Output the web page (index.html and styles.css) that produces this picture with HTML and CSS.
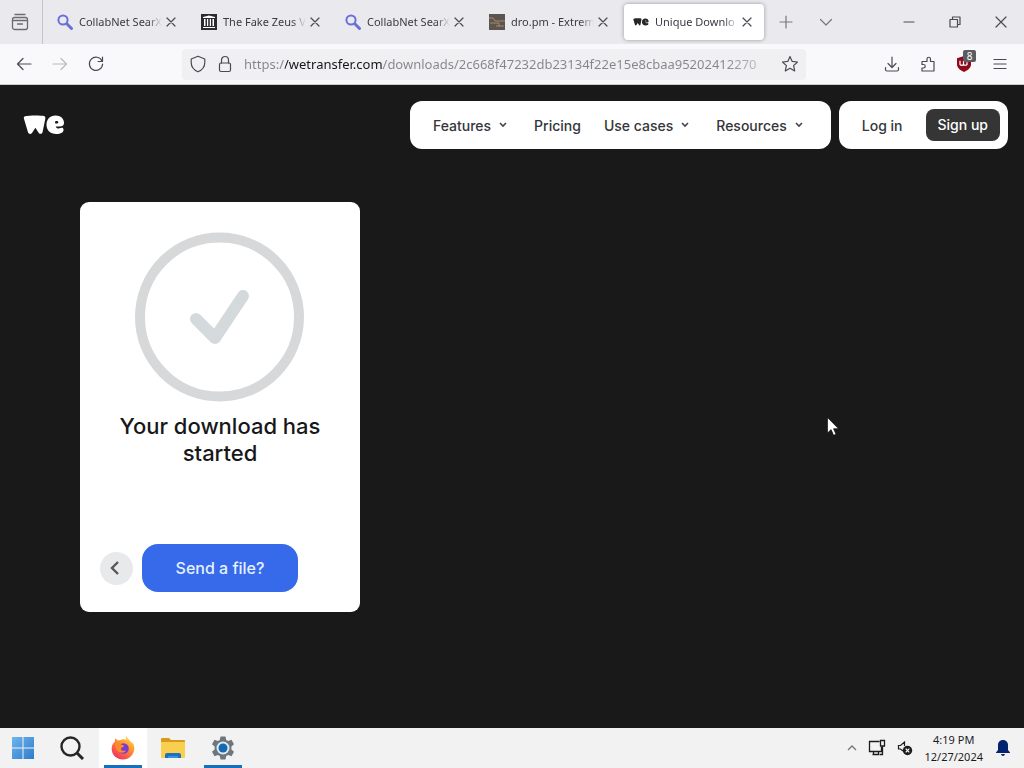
FILE: index.html
```
<!DOCTYPE html>
<html lang="en">
<head>
    <title>Unique Download Page</title>
    <meta charset="UTF-8">
    <link rel="stylesheet" href="styles.css">
</head>
<body>
    <div class="tab-strip">
        <button class="view-btn" aria-label="Firefox View">
            <svg width="18" height="18" viewBox="0 0 18 18" fill="none" stroke="#6b6b74" stroke-width="1.3" stroke-linecap="round"><path d="M4 1.500h10"/><rect x="1.500" y="4.500" width="15" height="12" rx="2"/><path d="M1.500 7.500h15M6.500 11h5"/></svg>
        </button>
        <div class="tabs">
            <div class="tab">
                <svg width="16" height="16" viewBox="0 0 16 16" fill="none" stroke="#6b70d8"><circle cx="6" cy="6" r="4.600" stroke-width="2"/><path d="M9.800 9.800l4.700 4.700" stroke-width="3" stroke-linecap="round"/></svg>
                <span class="tab-label">CollabNet SearX</span>
                <button class="tab-close" aria-label="Close tab"><svg width="10" height="10" viewBox="0 0 10 10"><path d="M1 1l8 8M9 1l-8 8"/></svg></button>
            </div>
            <div class="tab">
                <svg width="16" height="16" viewBox="0 0 16 16"><path fill="#2b2b2f" d="M0 0h16v16H0z"/><path fill="#fff" d="M2 3l6-1.500L14 3v1H2zM2 13h12v1H2zM3 5h1.500v7H3zM6 5h1.200v7H6zM8.800 5H10v7H8.800zM11.500 5H13v7h-1.500z"/></svg>
                <span class="tab-label">The Fake Zeus V</span>
                <button class="tab-close" aria-label="Close tab"><svg width="10" height="10" viewBox="0 0 10 10"><path d="M1 1l8 8M9 1l-8 8"/></svg></button>
            </div>
            <div class="tab">
                <svg width="16" height="16" viewBox="0 0 16 16" fill="none" stroke="#6b70d8"><circle cx="6" cy="6" r="4.600" stroke-width="2"/><path d="M9.800 9.800l4.700 4.700" stroke-width="3" stroke-linecap="round"/></svg>
                <span class="tab-label">CollabNet SearX</span>
                <button class="tab-close" aria-label="Close tab"><svg width="10" height="10" viewBox="0 0 10 10"><path d="M1 1l8 8M9 1l-8 8"/></svg></button>
            </div>
            <div class="tab">
                <svg width="16" height="16" viewBox="0 0 16 16"><path fill="#5d5450" d="M0 0h16v16H0z"/><path d="M0 4h4l2 3h10M1 9h9v3h5M7 12h4" fill="none" stroke="#a08c68"/></svg>
                <span class="tab-label">dro.pm - Extrem</span>
                <button class="tab-close" aria-label="Close tab"><svg width="10" height="10" viewBox="0 0 10 10"><path d="M1 1l8 8M9 1l-8 8"/></svg></button>
            </div>
            <div class="tab active">
                <svg width="16" height="16" viewBox="0 0 42 42" fill="#27272b"><use href="#we-mark" y="11"/></svg>
                <span class="tab-label">Unique Downlo</span>
                <button class="tab-close" aria-label="Close tab"><svg width="10" height="10" viewBox="0 0 10 10"><path d="M1 1l8 8M9 1l-8 8"/></svg></button>
            </div>
        </div>
        <button class="strip-btn" aria-label="New tab"><svg width="14" height="14" viewBox="0 0 14 14"><path d="M7 1v12M1 7h12"/></svg></button>
        <button class="strip-btn" aria-label="List all tabs"><svg width="14" height="14" viewBox="0 0 14 14"><path d="M1.500 4.500L7 10l5.500-5.500"/></svg></button>
        <div class="window-btns">
            <button aria-label="Minimize"><svg width="12" height="12" viewBox="0 0 12 12"><path d="M1 6h10"/></svg></button>
            <button aria-label="Restore"><svg width="12" height="12" viewBox="0 0 12 12"><path d="M1 3.500h7.500V11H1zM3.500 3.500V1H11v7.500H8.500"/></svg></button>
            <button aria-label="Close"><svg width="12" height="12" viewBox="0 0 12 12"><path d="M1 1l10 10M11 1L1 11"/></svg></button>
        </div>
    </div>

    <div class="toolbar">
        <div class="toolbar-left">
            <button aria-label="Back"><svg width="16" height="16" viewBox="0 0 16 16"><path d="M15 8H1.500M7 2.500L1.500 8 7 13.500"/></svg></button>
            <button aria-label="Forward" disabled><svg width="16" height="16" viewBox="0 0 16 16"><path d="M1 8h13.500M9 2.500L14.500 8 9 13.500"/></svg></button>
            <button aria-label="Reload"><svg width="16" height="16" viewBox="0 0 16 16"><path d="M14 5A6.600 6.600 0 1 0 14.600 8M14.500 1v4.500H10"/></svg></button>
        </div>
        <div class="url-bar">
            <svg width="16" height="18" viewBox="0 0 16 18"><path d="M8 1.200L14.800 4v3.500c0 4-2.600 7.500-6.800 9.300C3.800 15 1.200 11.500 1.200 7.500V4z"/></svg>
            <svg width="14" height="18" viewBox="0 0 14 18"><rect x="1.500" y="8" width="11" height="8.500" rx="1.500"/><path d="M3.500 8V5a3.500 3.500 0 0 1 7 0v3"/></svg>
            <input type="text" class="url-input" aria-label="Address" value="https://wetransfer.com/downloads/2c668f47232db23134f22e15e8cbaa95202412270">
            <button aria-label="Bookmark this page"><svg width="18" height="18" viewBox="0 0 18 18"><path d="M9 1.500l2.200 4.900 5.300.6-3.900 3.600 1.100 5.300L9 13.200l-4.700 2.700 1.100-5.300L1.500 7l5.300-.6z"/></svg></button>
        </div>
        <div class="toolbar-right">
            <button aria-label="Downloads"><svg width="16" height="16" viewBox="0 0 16 16"><path d="M8 1v10M4 7.500L8 11.500l4-4M1.500 11.500v2a1.500 1.500 0 0 0 1.500 1.500h10a1.500 1.500 0 0 0 1.500-1.500v-2"/></svg></button>
            <button aria-label="Extensions"><svg width="16" height="16" viewBox="0 0 16 16"><path d="M2 15h12V5.500h-3.500V3a1.700 1.700 0 0 0-3.500 0v2.500H2v3h1.500a1.700 1.700 0 0 1 0 3.500H2z"/></svg></button>
            <button class="blocker-btn" aria-label="Content blocker">
                <svg width="16" height="18" viewBox="0 0 16 18"><path class="shield" d="M8 1l7 2.200V9c0 4-3 6-7 8-4-2-7-4-7-8V3.200z"/><path class="shield-mark" d="M4 6v3.500q1.800 1.800 3.500 0V6M7.500 9.500q1.800 1.500 3.500 0V7.500"/></svg>
                <span class="badge">8</span>
            </button>
            <button aria-label="Menu"><svg width="14" height="14" viewBox="0 0 14 14"><path d="M1 2.500h12M1 7h12M1 11.500h12"/></svg></button>
        </div>
    </div>

    <main class="page">
        <header class="site-header">
            <a href="#" class="logo" aria-label="WeTransfer home">
                <svg width="42" height="20" viewBox="0 0 42 20" fill="#fff">
                    <g id="we-mark">
                        <path d="M2 1.200C6 .2 18 .2 21 1c1.500.5 1.500 1.500 1.200 3.200L19.600 17c-.4 2-2.600 2.500-3.800 1l-3.400-5.200L9 18c-1.200 1.700-3.300 1.200-4-.7L1.100 4.300C.6 2.500.7 1.600 2 1.200z"/>
                        <path fill-rule="evenodd" d="M32.500.6c5.200 0 8.500 3.200 8.500 7.300 0 2.600-2 3.500-4.500 3.500h-3.700c.5 2 2.700 2.600 4.900 1.600 1.500-.7 2.300-.2 2.700.9 1 3-2.700 5.100-7.200 5.100-6 0-9.700-3.700-9.700-9.200C23.500 4.400 27 .6 32.500.6zM32 7.200c0 .9.500 1.300 1.500 1.200 1.200 0 1.800-.3 1.800-1.200 0-.8-.7-1.300-1.600-1.300-1 0-1.700.5-1.700 1.300z"/>
                    </g>
                </svg>
            </a>
            <nav class="nav-box">
                <a href="#">Features <svg class="chev" width="8" height="6" viewBox="0 0 8 6"><path d="M1 1l3 3 3-3"/></svg></a>
                <a href="#">Pricing</a>
                <a href="#">Use cases <svg class="chev" width="8" height="6" viewBox="0 0 8 6"><path d="M1 1l3 3 3-3"/></svg></a>
                <a href="#">Resources <svg class="chev" width="8" height="6" viewBox="0 0 8 6"><path d="M1 1l3 3 3-3"/></svg></a>
            </nav>
            <div class="account-box">
                <a href="#">Log in</a>
                <a href="#" class="signup">Sign up</a>
            </div>
        </header>

        <section class="card">
            <svg class="done-icon" width="170" height="170" viewBox="0 0 170 170" fill="none">
                <circle cx="84.500" cy="85" r="79.500" stroke="#d7d8d9" stroke-width="10"/>
                <path d="M61 87l19 19 28-42" stroke="#d4d9db" stroke-width="12" stroke-linecap="round" stroke-linejoin="round"/>
            </svg>
            <h1>Your download has started</h1>
            <div class="card-actions">
                <button class="back-btn" aria-label="Back"><svg width="10" height="14" viewBox="0 0 10 14"><path d="M8 1L2 7l6 6"/></svg></button>
                <button class="send-btn">Send a file?</button>
            </div>
        </section>

        <svg class="cursor" width="12" height="19" viewBox="0 0 12 19"><path fill="#fff" stroke="#000" stroke-width=".6" d="M.5.5v15.500l3.600-3.400 2.500 5.700 2.400-1-2.500-5.600h5z"/></svg>
    </main>

    <footer class="taskbar">
        <div class="apps">
            <button aria-label="Start"><svg width="22" height="22" viewBox="0 0 22 22"><defs><linearGradient id="win" x2="1" y2="1"><stop stop-color="#6db5ec"/><stop offset="1" stop-color="#2f7ccb"/></linearGradient></defs><path fill="url(#win)" d="M0 0h10.500v10.500H0zM11.500 0H22v10.500H11.500zM0 11.500h10.500V22H0zM11.500 11.500H22V22H11.500z"/></svg></button>
            <button aria-label="Search"><svg width="26" height="24" viewBox="0 0 26 24" fill="none" stroke="#262626"><circle cx="10.500" cy="10.500" r="9" stroke-width="2.400"/><path d="M17 17l6 6" stroke-width="3"/></svg></button>
            <button class="running current" aria-label="Firefox">
                <svg width="24" height="24" viewBox="0 0 24 24">
                    <defs><linearGradient id="fox" x1="1" y1="0" x2=".3" y2="1"><stop stop-color="#ffe14a"/><stop offset=".45" stop-color="#ff982e"/><stop offset="1" stop-color="#f5305f"/></linearGradient></defs>
                    <path fill="url(#fox)" d="M15 0c-.5 2 .2 3.200 1.700 4.500C15 3.300 12.500 3 10.500 3.700L7 4.500 4.500 2.500C3.800 3.500 3.700 4.600 4 5.600 1.500 7.600.5 10.500.7 13.500 1 19.300 6 23.500 12 23.500S23.300 18.700 23.300 12.500c0-3-1-5.300-2.800-7l.3 2.300C19 4 16.300 2.800 15 0z"/>
                    <circle cx="12.500" cy="12.500" r="5.300" fill="#7a3bd3"/>
                    <path fill="#ff8a2a" d="M4 7.500c2.500-1 5 0 6.500 1.200 1.300.2 2.500.4 2.500 1.200-.3 1-2.500 1.200-3 2.500-.3 2 2 3 5 2-1 2.500-5 3-7.500 1S4 10 4 7.500z"/>
                </svg>
            </button>
            <button aria-label="File Explorer">
                <svg width="26" height="24" viewBox="0 0 26 24"><path fill="#d99a1c" d="M1 3q0-1 1-1h7l2 2h13q1 0 1 1v5H1z"/><path fill="#f8cf4e" d="M1 6h24v15q0 1-1 1H2q-1 0-1-1z"/><path fill="#1f6fbd" d="M5 22v-3q0-2 2-2h12q2 0 2 2v3z"/><path fill="#2f95dd" d="M8 20h10v2H8z"/></svg>
            </button>
            <button class="running" aria-label="Settings">
                <svg width="24" height="24" viewBox="0 0 24 24"><path fill="#6e767d" d="M9.500.5h5l.7 3.400 2 1.100 3.300-1.200L23 8.200l-2.600 2.300v3L23 15.800l-2.500 4.400-3.300-1.200-2 1.100-.7 3.400h-5l-.7-3.400-2-1.100-3.300 1.200L1 15.800l2.600-2.300v-3L1 8.200l2.500-4.400L6.800 5l2-1.100z"/><circle cx="12" cy="12" r="6.500" fill="#dcecf7"/><circle cx="12" cy="12" r="4.500" fill="#1668b0"/></svg>
            </button>
        </div>
        <div class="tray">
            <button aria-label="Show hidden icons"><svg width="10" height="6" viewBox="0 0 10 6" fill="none" stroke="#777" stroke-width="1.300"><path d="M1 5l4-4 4 4"/></svg></button>
            <svg width="18" height="18" viewBox="0 0 18 18" fill="none" stroke="#1c1c1c" stroke-width="1.300"><path d="M11.500 2.500h-10v10h12V8M4.500 15.500h7M5.500 12.500v3M10.500 12.500v3M12.500 1.500h4V7h-4zM14.500 7v8.500H12"/></svg>
            <svg width="16" height="16" viewBox="0 0 16 16" fill="none" stroke="#1c1c1c" stroke-width="1.200"><path d="M6 11L3.500 9H1.500V5.500h2L7.500 2v4"/><circle cx="10.500" cy="10.500" r="4.700" fill="#1c1c1c" stroke="none"/><path stroke="#fff" d="M8.700 8.700l3.600 3.600M12.300 8.700l-3.600 3.600"/></svg>
            <div class="clock"><span>4:19 PM</span><span>12/27/2024</span></div>
            <button aria-label="Notifications"><svg width="14" height="16" viewBox="0 0 14 16" fill="#04246f"><path d="M7 0c3 0 5 2.200 5 5v5l2 2.500v.5H0v-.5L2 10V5c0-2.800 2-5 5-5zM5 14h4q-.5 2-2 2t-2-2z"/></svg></button>
        </div>
    </footer>
</body>
</html>
```
FILE: styles.css
```
* {
    box-sizing: border-box;
}

body {
    margin: 0;
    min-height: 100vh;
    display: flex;
    flex-direction: column;
    background: #191919;
    font-family: "Noto Sans", "Open Sans", sans-serif;
    color: #15141a;
}

button {
    display: flex;
    align-items: center;
    justify-content: center;
    padding: 0;
    border: none;
    background: none;
    font-family: inherit;
    color: inherit;
    cursor: pointer;
}

svg {
    flex: none;
}

a {
    color: inherit;
    text-decoration: none;
}

/* browser tabs */
.tab-strip {
    display: flex;
    align-items: center;
    height: 44px;
    background: #eaeaee;
}

.view-btn {
    width: 43px;
    height: 44px;
    padding-right: 3px;
    border-right: 1px solid #c4c4ca;
}

.tabs {
    display: flex;
    gap: 4px;
    padding: 0 2px 0 5px;
}

.tab {
    display: flex;
    align-items: center;
    width: 140px;
    height: 36px;
    padding: 0 8px 0 9px;
    border-radius: 4px;
    font-size: 11px;
}

.tab.active {
    background: #fff;
    box-shadow: 0 0 4px rgba(0, 0, 0, 0.35);
}

.tab-label {
    flex: 1;
    margin-left: 6px;
    line-height: 18px;
    overflow: hidden;
    white-space: nowrap;
    color: #3a3944;
    -webkit-mask-image: linear-gradient(to left, transparent, #000 14px);
    mask-image: linear-gradient(to left, transparent, #000 14px);
}

.tab-close {
    width: 18px;
    height: 20px;
}

.tab-close svg,
.strip-btn svg,
.window-btns svg,
.toolbar svg {
    fill: none;
    stroke: #4b4a54;
    stroke-width: 1.2;
    stroke-linecap: round;
    stroke-linejoin: round;
}

.strip-btn {
    width: 40px;
    height: 36px;
}

.strip-btn svg {
    stroke: #777680;
}

.window-btns {
    display: flex;
    margin-left: auto;
}

.window-btns button {
    width: 46px;
    height: 44px;
}

/* address bar */
.toolbar {
    display: flex;
    align-items: center;
    justify-content: space-between;
    height: 41px;
    padding: 0 6px;
    background: #f9f9fb;
    border-bottom: 1px solid #ccc;
}

.toolbar-left,
.toolbar-right {
    display: flex;
}

.toolbar-left button,
.toolbar-right button {
    width: 36px;
    height: 32px;
}

.toolbar button:disabled {
    opacity: 0.35;
}

.url-bar {
    display: flex;
    align-items: center;
    flex: 0 1 624px;
    height: 31px;
    margin-left: 68px;
    padding: 0 7px 0 8px;
    gap: 12px;
    background: #f0f0f2;
    border-radius: 4px;
}

/* domain is dark, the rest grey, fading out at the right */
.url-input {
    flex: 1;
    min-width: 0;
    height: 30px;
    margin-right: -8px;
    padding: 0;
    border: none;
    outline: none;
    font-family: inherit;
    font-size: 13px;
    color: transparent;
    background: linear-gradient(to right, #85848c 41px, #15141a 41px, #15141a 139px, #85848c 139px, #85848c 480px, rgba(133, 132, 140, 0.2) 530px);
    -webkit-background-clip: text;
    background-clip: text;
}

.toolbar-right {
    margin-left: auto;
}

.blocker-btn {
    position: relative;
}

.toolbar .shield {
    fill: #8c0a1c;
    stroke: none;
}

.toolbar .shield-mark {
    stroke: #fff;
}

.badge {
    position: absolute;
    top: 2px;
    right: 6px;
    width: 13px;
    background: #5b5b60;
    border-radius: 2px;
    color: #fff;
    font-size: 10px;
    line-height: 12px;
}

/* download page */
.page {
    position: relative;
    flex: 1;
    font-family: Inter, sans-serif;
}

.site-header {
    display: flex;
    align-items: center;
    gap: 8px;
    padding: 16px 16px 0 23px;
    font-size: 14px;
    font-weight: 500;
    color: #35353a;
}

.logo {
    display: flex;
    margin-right: auto;
}

.nav-box,
.account-box {
    display: flex;
    align-items: center;
    gap: 23px;
    height: 48px;
    background: #fff;
    border-radius: 12px;
}

.nav-box {
    padding: 0 24px 0 23px;
}

.nav-box a {
    display: flex;
    align-items: center;
    gap: 8px;
}

.account-box {
    padding: 0 8px 0 23px;
}

.chev {
    margin-right: 4px;
    fill: none;
    stroke: #44444a;
    stroke-width: 1.6;
}

.signup {
    padding: 0 12px;
    line-height: 32px;
    border-radius: 8px;
    background: #353535;
    color: #fff;
}

.card {
    display: flex;
    flex-direction: column;
    align-items: center;
    width: 280px;
    min-height: 410px;
    margin: 53px 0 0 80px;
    padding: 30px 20px 20px;
    background: #fff;
    border-radius: 9px;
}

.card h1 {
    margin: 11px 0 0;
    font-size: 22px;
    line-height: 27px;
    font-weight: 500;
    text-align: center;
    color: #17181a;
}

.card-actions {
    display: flex;
    align-items: center;
    align-self: stretch;
    gap: 9px;
    margin-top: auto;
}

.back-btn {
    width: 33px;
    height: 33px;
    padding-right: 3px;
    border-radius: 50%;
    background: #e8e9ea;
}

.back-btn svg {
    fill: none;
    stroke: #55575a;
    stroke-width: 2.4;
}

.send-btn {
    width: 156px;
    height: 48px;
    border-radius: 16px;
    background: #3769eb;
    color: #e4f1ff;
    font-size: 16px;
    font-weight: 500;
}

.cursor {
    position: absolute;
    left: 827px;
    top: 332px;
}

/* desktop taskbar */
.taskbar {
    display: flex;
    align-items: center;
    justify-content: space-between;
    height: 40px;
    background: #f2f2f2;
}

.apps {
    display: flex;
    gap: 2px;
    margin-left: -1px;
}

.apps button {
    width: 48px;
    height: 40px;
}

.apps .current {
    background: #fff;
}

.apps .running {
    background-image: linear-gradient(#1470bd, #1470bd);
    background-size: 38px 3px;
    background-position: bottom center;
    background-repeat: no-repeat;
}

.tray {
    display: flex;
    align-items: center;
    gap: 11px;
    padding-right: 14px;
}

.clock {
    display: flex;
    flex-direction: column;
    align-items: center;
    margin-right: 2px;
    font-size: 11px;
    line-height: 17px;
    color: #1c1c1c;
}
```
